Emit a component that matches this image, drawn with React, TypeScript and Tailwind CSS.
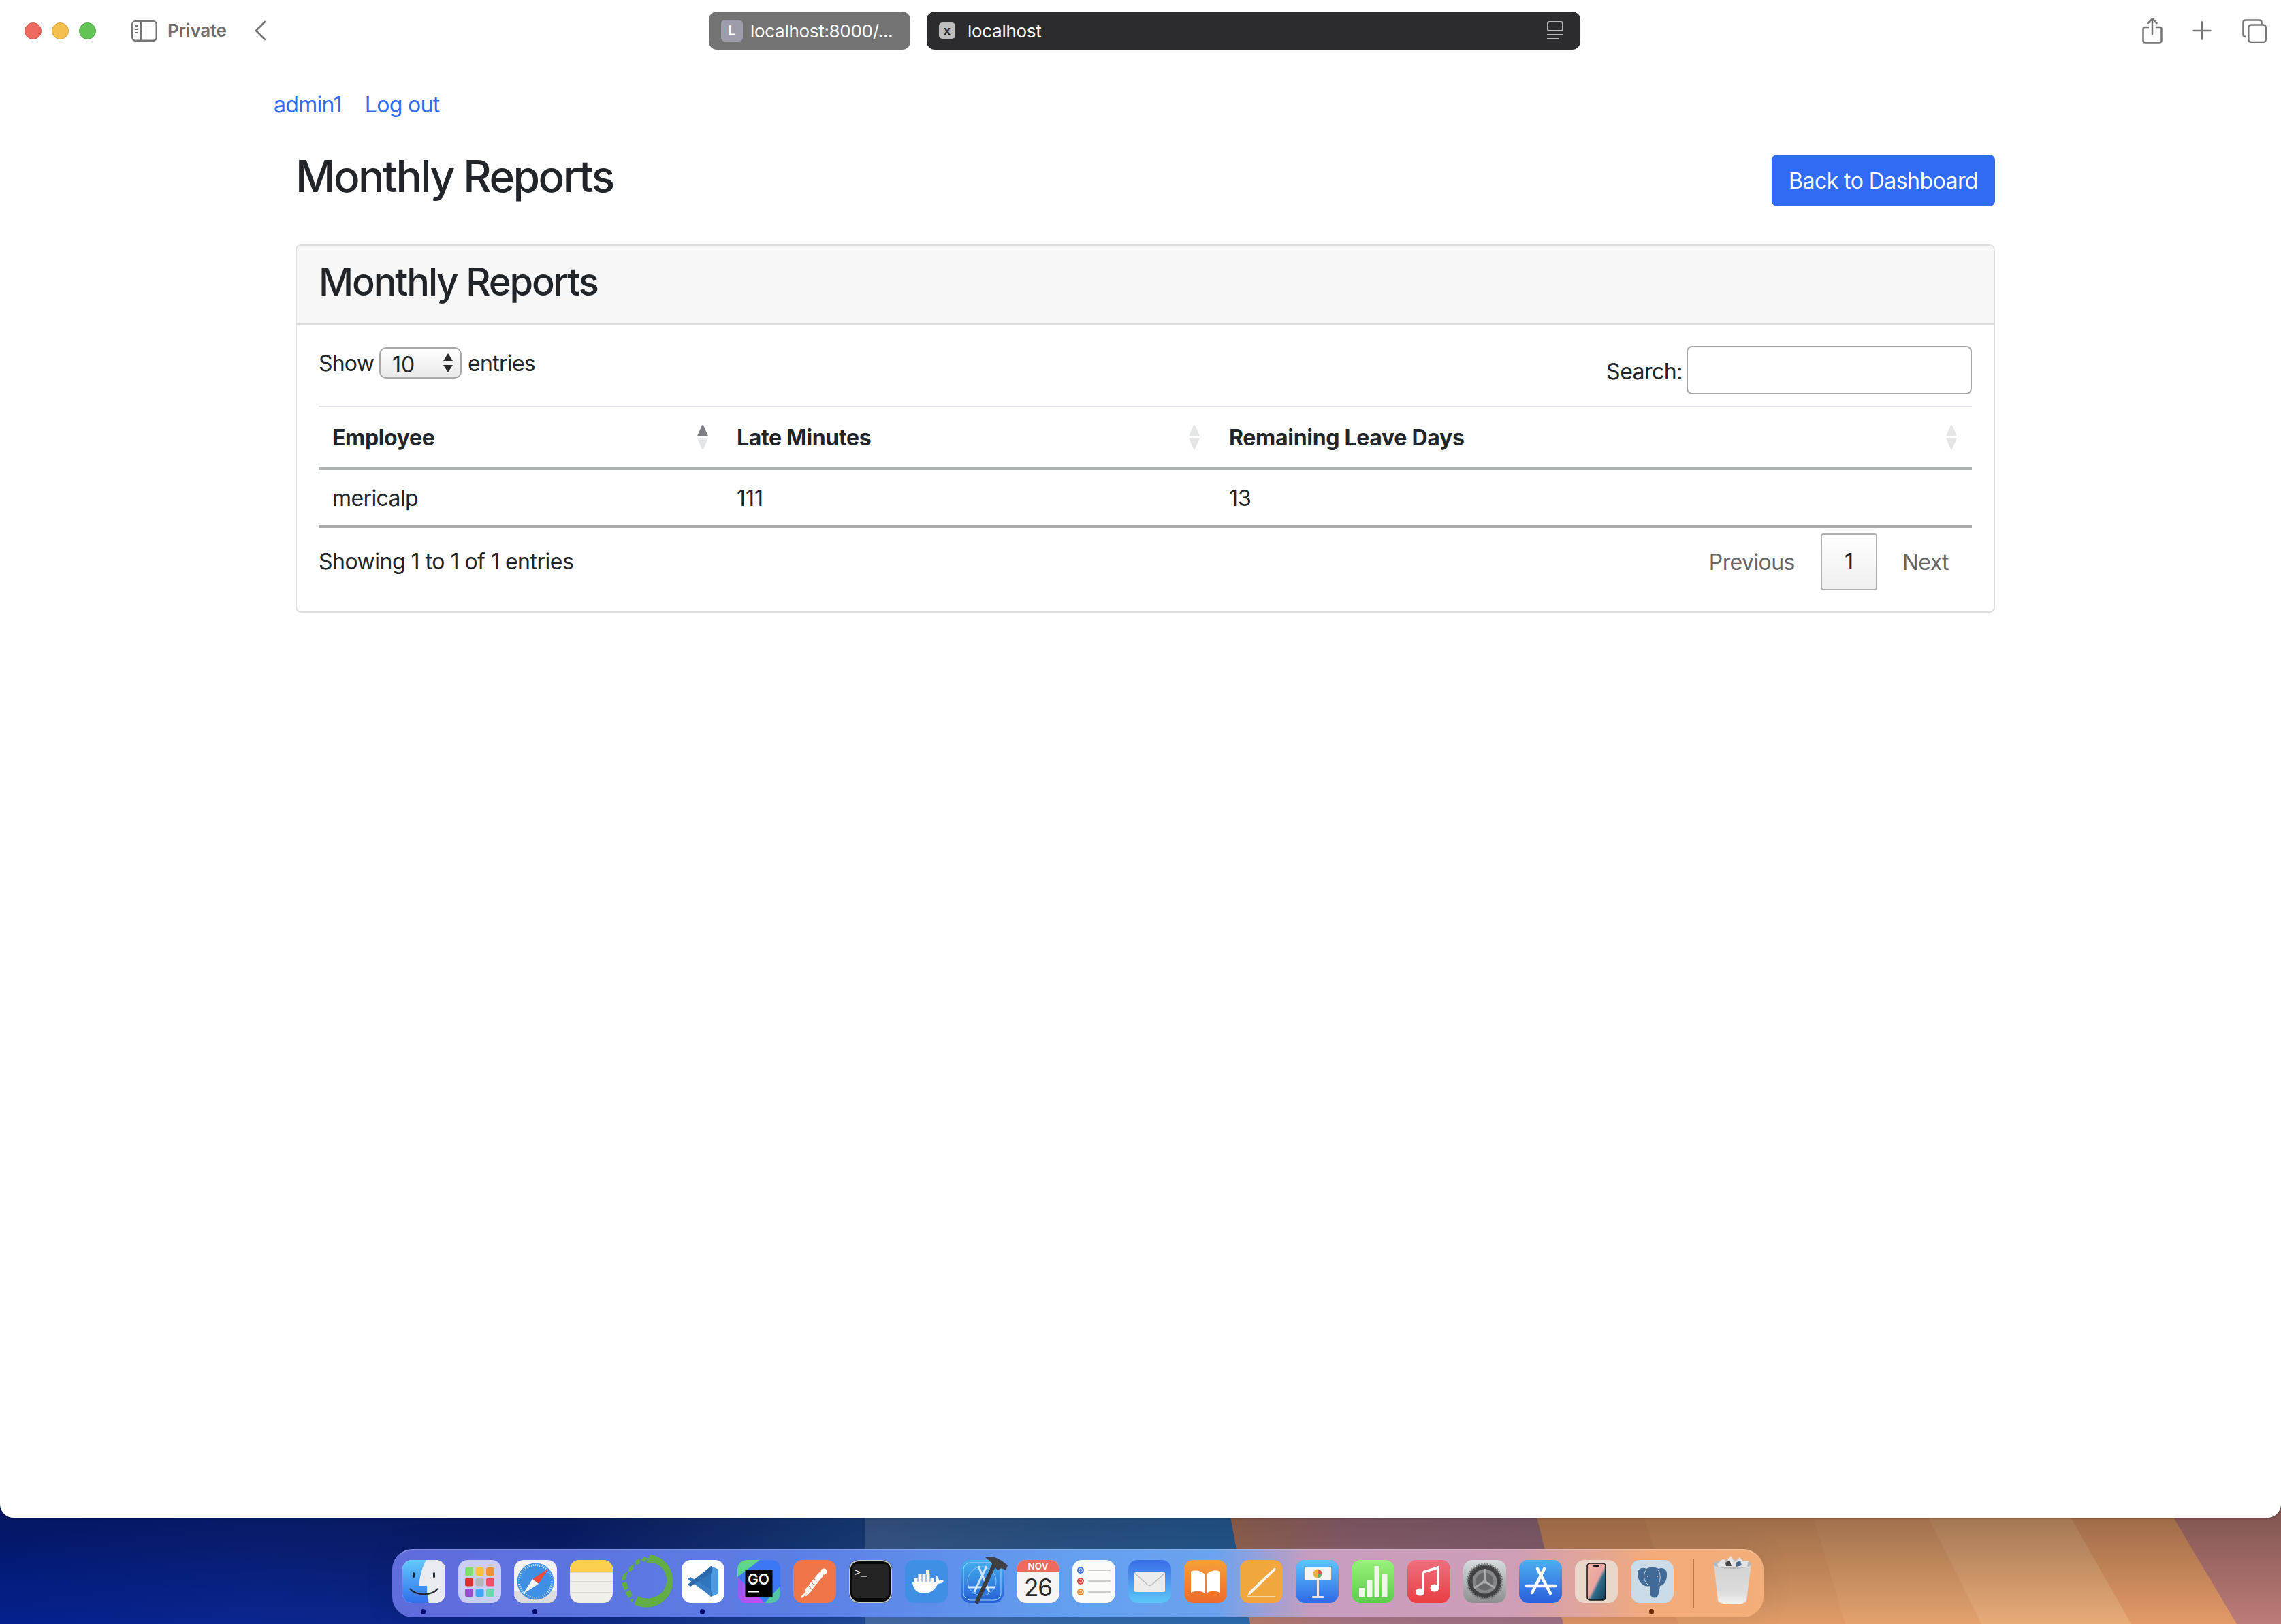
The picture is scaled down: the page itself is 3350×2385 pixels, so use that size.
import React from 'react'

const SortIcon = ({ active = false }: { active?: boolean }) => (
  <svg className="absolute right-[22px] top-[26px]" width="16" height="36" viewBox="0 0 16 36">
    <path d="M8 0 C9 0 10 2 11 5 L15.5 15 C16 16.500 15.500 17 14 17 L2 17 C.5 17 0 16.500 .5 15 L5 5 C6 2 7 0 8 0 Z" fill={active ? '#7d7f82' : '#e3e5e6'} />
    <path d="M8 36 C9 36 10 34 11 31 L15.500 21 C16 19.500 15.500 19 14 19 L2 19 C.5 19 0 19.500 .5 21 L5 31 C6 34 7 36 8 36 Z" fill="#e3e5e6" />
  </svg>
)

const Tile = ({ children, fill = '#fff', id }: { children?: React.ReactNode; fill?: string; id?: string }) => (
  <svg width="63" height="63" viewBox="0 0 63 63" className="overflow-visible">
    <defs>
      <clipPath id={id ?? 'tile'}>
        <rect x="0" y="0" width="63" height="63" rx="14" />
      </clipPath>
    </defs>
    <g clipPath={`url(#${id ?? 'tile'})`}>
      <rect width="63" height="63" fill={fill} />
      {children}
    </g>
  </svg>
)

const FinderIcon = () => (
  <Tile id="finder" fill="#dfe3ea">
    <defs>
      <linearGradient id="finderBlue" x1="0" y1="0" x2="0" y2="1">
        <stop offset="0" stopColor="#63c9fb" />
        <stop offset="1" stopColor="#2f6fec" />
      </linearGradient>
    </defs>
    <path d="M0 0 H35 C29 12 25 24 25 38 H36 C36 46 37 55 39 63 H0 Z" fill="url(#finderBlue)" />
    <path d="M35 0 H63 V63 H39 C37 55 36 46 36 38 H25 C25 24 29 12 35 0 Z" fill="#e9ebf0" />
    <rect x="15" y="18" width="3" height="8" rx="1.500" fill="#1c2430" />
    <rect x="45" y="18" width="3" height="8" rx="1.500" fill="#1c2430" />
    <path d="M11 42 C20 53 43 53 52 42" fill="none" stroke="#1c2430" strokeWidth="2" />
  </Tile>
)

const LaunchpadIcon = () => {
  const colors = ['#7fe06a', '#f8c13c', '#ee9338', '#d8322c', '#b4b8bc', '#f0506a', '#9a4bd6', '#3fa6f8', '#6cd8ae']
  return (
    <Tile id="launch" fill="#c9cef2">
      {colors.map((c, i) => (
        <rect key={c} x={10 + (i % 3) * 15.500} y={11 + Math.floor(i / 3) * 15.500} width="12" height="12" rx="2.500" fill={c} />
      ))}
    </Tile>
  )
}

const SafariIcon = () => (
  <Tile id="safari" fill="#f4f4f6">
    <rect y="45" width="63" height="18" fill="#dddde0" />
    <circle cx="31.500" cy="31.500" r="27" fill="#3f8fe4" />
    <circle cx="31.500" cy="31.500" r="24" fill="none" stroke="#dcecfb" strokeWidth="3" strokeDasharray="1 2.200" />
    <path d="M50 13 L27 28 L36 35 Z" fill="#ef4a3c" />
    <path d="M13 50 L27 28 L36 35 Z" fill="#f4f4f4" />
  </Tile>
)

const NotesIcon = () => (
  <Tile id="notes" fill="#f1efea">
    <rect width="63" height="17" fill="#fbcf4e" />
    <rect y="17" width="63" height="1.500" fill="#c9c6bc" />
    <rect y="31" width="63" height="1" fill="#dedbd3" />
    <rect y="47" width="63" height="1" fill="#dedbd3" />
  </Tile>
)

const RingIcon = () => (
  <svg width="63" height="63" viewBox="0 0 63 63" className="overflow-visible">
    <path d="M36 -8 A39 39 0 1 1 12 65 L18 53 C25 57 33 57.500 40 55 A26 26 0 0 0 30 4 Z" fill="#62ae45" />
    <g fill="#62ae45">
      <path d="M27 -5 L33 -2 L27 3 L22 0 Z" />
      <path d="M14 1 L20 -2 L21 5 L15 8 Z" />
      <path d="M5 11 L12 6 L11 14 L4 18 Z" />
      <path d="M-4 21 L2 17 L1 27 L-6 31 Z" />
      <path d="M-6 34 L1 32 L4 41 L-2 45 Z" />
      <path d="M-1 48 L6 44 L10 52 L4 56 Z" />
      <path d="M6 59 L11 56 L10 63 Z" />
    </g>
  </svg>
)

const VSCodeIcon = () => (
  <Tile id="vscode" fill="#ffffff">
    <path d="M43 9 L54 14 V49 L43 54 L18 31 Z" fill="#2e75bd" />
    <path d="M43 9 L54 14 V49 L43 54 Z" fill="#4a9ae6" />
    <path d="M9 28 L13 25 L44 44 V54 L40 51 Z" fill="#3a7fc6" />
    <path d="M9 36 L13 39 L44 19 V9 L40 12 Z" fill="#2b69ab" />
  </Tile>
)

const GoLandIcon = () => (
  <Tile id="goland" fill="#3c78f6">
    <defs>
      <linearGradient id="goPurple" x1="0" y1="0" x2="1" y2="1">
        <stop offset="0" stopColor="#8f5cf0" />
        <stop offset="1" stopColor="#c84df0" />
      </linearGradient>
    </defs>
    <path d="M0 23 L33 0 H63 V38 L40 63 H0 Z" fill="#3c78f6" />
    <path d="M0 25 L33 0 H0 Z" fill="#5fd68f" />
    <path d="M0 25 L40 63 H0 Z" fill="url(#goPurple)" />
    <path d="M63 38 V63 H40 Z" fill="#53c4a4" />
    <rect x="11.500" y="15" width="40" height="40" fill="#000" />
    <text x="31" y="36" textAnchor="middle" fontSize="21" fontWeight="600" fill="#fff" fontFamily="Inter, sans-serif">GO</text>
    <rect x="16" y="45" width="16" height="2.500" fill="#fff" />
  </Tile>
)

const PostmanIcon = () => (
  <Tile id="postman" fill="#f0764a">
    <g fill="none" stroke="#fff" strokeLinecap="round">
      <circle cx="45" cy="17" r="4.500" fill="#fff" stroke="none" />
      <path d="M40 22 L22 44" strokeWidth="8" />
      <path d="M21 46 L13 54" strokeWidth="3" />
      <path d="M27 44 L19 52" strokeWidth="2" />
    </g>
    <path d="M30 26 L35 33 M26 31 L31 38 M22 37 L27 43" stroke="#f0764a" strokeWidth="1" />
  </Tile>
)

const TerminalIcon = () => (
  <Tile id="terminal" fill="#000">
    <rect x="1" y="1" width="61" height="61" rx="13" fill="#0a0a0a" stroke="#c9ccca" strokeWidth="2" />
    <rect x="5" y="6" width="53" height="50" rx="6" fill="#232323" />
    <text x="8" y="23" fontSize="15" fill="#fff" fontFamily="'Liberation Mono', monospace">&gt;_</text>
  </Tile>
)

const DockerIcon = () => (
  <Tile id="docker" fill="#3f8fe6">
    <g fill="#fff">
      <rect x="31" y="15" width="5" height="5" />
      <rect x="19.500" y="21" width="5" height="5" /><rect x="25.500" y="21" width="5" height="5" /><rect x="31.500" y="21" width="5" height="5" />
      <rect x="13.500" y="27" width="5" height="5" /><rect x="19.500" y="27" width="5" height="5" /><rect x="25.500" y="27" width="5" height="5" /><rect x="31.500" y="27" width="5" height="5" /><rect x="37.500" y="27" width="5" height="5" />
      <path d="M11 33 H45 C46 30 46 26 45 22 C48 24 50 27 50 30 C53 29 55 29 57 31 C55 34 51 35 48 35 C45 43 38 49 28 49 C18 49 12 43 11 33 Z" />
    </g>
  </Tile>
)

const XcodeIcon = () => (
  <svg width="63" height="72" viewBox="0 0 63 72" className="overflow-visible -mt-[5px]">
    <defs>
      <linearGradient id="xcBlue" x1="0" y1="0" x2="0" y2="1">
        <stop offset="0" stopColor="#46b0ee" />
        <stop offset="1" stopColor="#2560d8" />
      </linearGradient>
    </defs>
    <rect y="5" width="63" height="63" rx="14" fill="url(#xcBlue)" />
    <rect x="4" y="9" width="55" height="55" rx="10" fill="none" stroke="#a9d3f6" strokeWidth="1" />
    <circle cx="31" cy="36" r="21" fill="none" stroke="#8fc3f2" strokeWidth="1" />
    <path d="M26 14 L42 52 M38 14 L20 52 M11 45 H50" fill="none" stroke="#cfe5fb" strokeWidth="3" />
    <path d="M49 12 L24 66" stroke="#3a3c42" strokeWidth="6" strokeLinecap="round" />
    <path d="M36 1 C46 -2 56 2 69 13 L66 20 L60 17 L54 20 L47 12 C44 7 41 5 36 1 Z" fill="#3f4046" />
  </svg>
)

const CalendarIcon = () => (
  <Tile id="calendar" fill="#f7f5f1">
    <rect width="63" height="18" fill="#ec6a5e" />
    <text x="31.500" y="14" textAnchor="middle" fontSize="13.500" fontWeight="600" fill="#fff" fontFamily="Inter, sans-serif">NOV</text>
    <text x="31.500" y="53" textAnchor="middle" fontSize="35" fill="#2a2a2a" fontFamily="Inter, sans-serif" letterSpacing="-1">26</text>
  </Tile>
)

const RemindersIcon = () => (
  <Tile id="reminders" fill="#fbfbfa">
    {[['#3f74e0', 15], ['#e34840', 31], ['#ef9130', 47]].map(([c, y]) => (
      <g key={c as string}>
        <circle cx="12" cy={y as number} r="5" fill={c as string} />
        <circle cx="12" cy={y as number} r="2.500" fill="none" stroke="#fff" strokeWidth="0.800" />
        <rect x="23" y={(y as number) - 0.750} width="33" height="1.500" fill="#bdbdbd" />
      </g>
    ))}
  </Tile>
)

const MailIcon = () => (
  <Tile id="mail" fill="#4f9ef2">
    <defs>
      <linearGradient id="mailBlue" x1="0" y1="0" x2="0" y2="1">
        <stop offset="0" stopColor="#386de6" />
        <stop offset="1" stopColor="#5dc6fa" />
      </linearGradient>
    </defs>
    <rect width="63" height="63" fill="url(#mailBlue)" />
    <rect x="9" y="18" width="45" height="29" rx="2" fill="#ececec" />
    <path d="M9 19 L28 36 C30 38 33 38 35 36 L54 19" fill="none" stroke="#bcbcbc" strokeWidth="1.500" />
  </Tile>
)

const BooksIcon = () => (
  <Tile id="books" fill="#f28a30">
    <defs>
      <linearGradient id="booksOr" x1="0" y1="0" x2="0" y2="1">
        <stop offset="0" stopColor="#f5a03a" />
        <stop offset="1" stopColor="#ee6a2a" />
      </linearGradient>
    </defs>
    <rect width="63" height="63" fill="url(#booksOr)" />
    <path d="M30 21 C26 16 16 14 10 17 V48 C16 45 26 45 30 49 Z" fill="#fff" />
    <path d="M33 21 C37 16 47 14 53 17 V48 C47 45 37 45 33 49 Z" fill="#fff" />
  </Tile>
)

const PagesIcon = () => (
  <Tile id="pages" fill="#f2a63e">
    <path d="M50 12 C52 11 53 12 52 15 L17 49 L11 53 L14 46 Z" fill="#f7f7f7" />
    <rect x="11" y="53" width="41" height="1.500" fill="#f7d9a8" />
  </Tile>
)

const KeynoteIcon = () => (
  <Tile id="keynote" fill="#3f8ff0">
    <defs>
      <linearGradient id="keyBlue" x1="0" y1="0" x2="0" y2="1">
        <stop offset="0" stopColor="#5cc6fb" />
        <stop offset="1" stopColor="#2f68e6" />
      </linearGradient>
    </defs>
    <rect width="63" height="63" fill="url(#keyBlue)" />
    <rect x="13" y="10" width="39" height="19" rx="1" fill="#f4f4f4" />
    <circle cx="32" cy="20" r="6.500" fill="#f1b23d" />
    <path d="M32 20 V13.500 A6.500 6.500 0 0 1 38.500 20 Z" fill="#e5534b" />
    <path d="M32 20 H38.500 A6.500 6.500 0 0 1 32 26.500 Z" fill="#55b56a" />
    <rect x="31" y="29" width="3" height="25" fill="#e8e8e8" />
    <rect x="24" y="53" width="17" height="3" rx="1" fill="#e8e8e8" />
  </Tile>
)

const NumbersIcon = () => (
  <Tile id="numbers" fill="#6fda62">
    <defs>
      <linearGradient id="numGreen" x1="0" y1="0" x2="0" y2="1">
        <stop offset="0" stopColor="#98f27a" />
        <stop offset="1" stopColor="#5ccc4c" />
      </linearGradient>
    </defs>
    <rect width="63" height="63" fill="url(#numGreen)" />
    <rect x="11" y="41" width="8" height="14" rx="1" fill="#eef7ea" />
    <rect x="22.500" y="29" width="8" height="26" rx="1" fill="#eef7ea" />
    <rect x="33.500" y="9" width="7.500" height="46" rx="1" fill="#eef7ea" />
    <rect x="44.500" y="21" width="8" height="34" rx="1" fill="#eef7ea" />
  </Tile>
)

const MusicIcon = () => (
  <Tile id="music" fill="#ea4a52">
    <defs>
      <linearGradient id="musicRed" x1="0" y1="0" x2="0" y2="1">
        <stop offset="0" stopColor="#ef6f7f" />
        <stop offset="1" stopColor="#e83f42" />
      </linearGradient>
    </defs>
    <rect width="63" height="63" fill="url(#musicRed)" />
    <path d="M23 18 L45 11 V41" fill="none" stroke="#fff" strokeWidth="3.500" />
    <path d="M23 18 V49" fill="none" stroke="#fff" strokeWidth="3.500" />
    <ellipse cx="18.500" cy="47" rx="6.500" ry="5.500" fill="#fff" />
    <ellipse cx="40" cy="41" rx="6.500" ry="5.500" fill="#fff" />
  </Tile>
)

const SettingsIcon = () => (
  <Tile id="settings" fill="#b6bcbe">
    <defs>
      <linearGradient id="setGrey" x1="0" y1="0" x2="0" y2="1">
        <stop offset="0" stopColor="#d6dde0" />
        <stop offset="1" stopColor="#8d8f8f" />
      </linearGradient>
    </defs>
    <rect width="63" height="63" fill="url(#setGrey)" />
    <circle cx="31.500" cy="31.500" r="25" fill="#3f4143" />
    <circle cx="31.500" cy="31.500" r="25" fill="none" stroke="#77797b" strokeWidth="4" strokeDasharray="2 2" />
    <circle cx="31.500" cy="31.500" r="18" fill="#85878a" />
    <circle cx="31.500" cy="31.500" r="13" fill="#66686a" />
    <path d="M31.500 31.500 V13 M31.500 31.500 L47 41 M31.500 31.500 L16 41" stroke="#a9abad" strokeWidth="3" />
    <circle cx="31.500" cy="31.500" r="3" fill="#a9abad" />
  </Tile>
)

const AppStoreIcon = () => (
  <Tile id="appstore" fill="#3a8eea">
    <defs>
      <linearGradient id="appBlue" x1="0" y1="0" x2="0" y2="1">
        <stop offset="0" stopColor="#4eaef0" />
        <stop offset="1" stopColor="#2a5fdc" />
      </linearGradient>
    </defs>
    <rect width="63" height="63" fill="url(#appBlue)" />
    <g stroke="#fff" strokeWidth="4.500" strokeLinecap="round" fill="none">
      <path d="M37 13 L19 48" />
      <path d="M27 13 L46 49" />
      <path d="M11 38 H53" />
    </g>
  </Tile>
)

const IPhoneIcon = () => (
  <Tile id="iphone" fill="#e8d8cc">
    <defs>
      <linearGradient id="phoneBg" x1="0" y1="0" x2="1" y2="1">
        <stop offset="0" stopColor="#f2b0a4" />
        <stop offset="0.500" stopColor="#e9a6a0" />
        <stop offset="0.600" stopColor="#2f6f8c" />
        <stop offset="1" stopColor="#123a50" />
      </linearGradient>
    </defs>
    <rect x="18" y="5" width="27" height="54" rx="4" fill="url(#phoneBg)" stroke="#111" strokeWidth="1.500" />
    <rect x="27" y="7.500" width="9" height="2.500" rx="1.250" fill="#111" />
  </Tile>
)

const PgAdminIcon = () => (
  <Tile id="pgadmin" fill="#ccdbe8">
    <path d="M10 20 C10 13 17 10 23 13 C27 10 36 10 41 13 C47 10 54 14 53 22 C53 31 49 37 43 38 C42 44 42 50 38 55 C34 56 31 55 29 52 L28 38 C22 40 16 36 13 31 C11 28 10 24 10 20 Z" fill="#426a97" />
    <path d="M23 14 C18 20 18 30 25 36 M40 14 C44 20 44 28 41 36" fill="none" stroke="#e8eef4" strokeWidth="0.800" />
    <circle cx="25" cy="24" r="1" fill="#e8eef4" />
    <circle cx="39" cy="24" r="1" fill="#e8eef4" />
  </Tile>
)

const TrashIcon = () => (
  <svg width="57" height="72" viewBox="0 0 57 72" className="overflow-visible">
    <defs>
      <linearGradient id="trashBody" x1="0" y1="0" x2="0" y2="1">
        <stop offset="0" stopColor="#d2d2d2" />
        <stop offset="0.700" stopColor="#dcdcdc" />
        <stop offset="1" stopColor="#f4f4f4" />
      </linearGradient>
    </defs>
    <path d="M1 13 L7 66 C8 70 14 72 28 72 C42 72 48 70 49 66 L56 13 Z" fill="url(#trashBody)" />
    <ellipse cx="28.500" cy="13" rx="28" ry="7" fill="#b9b9b9" />
    <path d="M6 13 L15 5 L19 10 L26 1 L32 10 L39 3 L44 9 L52 8 L50 17 L8 18 Z" fill="#e4e4e6" />
    <path d="M18 11 L24 7 L27 16 L19 16 Z" fill="#444" />
    <path d="M33 11 L40 8 L42 15 L34 17 Z" fill="#4a6a90" />
  </svg>
)

const DockItem = ({ children, dot }: { children: React.ReactNode; dot?: string }) => (
  <div className="relative w-[63px] h-[63px] shrink-0">
    {children}
    {dot && <span className={`absolute left-[27px] top-[72px] w-[7px] h-[8px] rounded-full ${dot}`} />}
  </div>
)

// the desktop picture under the window, only its lower strip shows
const Wallpaper = () => (
  <svg className="absolute left-0 bottom-0" width="3350" height="185" viewBox="0 0 3350 185">
    <defs>
      <linearGradient id="wpLeft" x1="0" y1="0" x2="1" y2="0">
        <stop offset="0" stopColor="#04208e" />
        <stop offset="0.300" stopColor="#0a2590" />
        <stop offset="0.650" stopColor="#0c2482" />
        <stop offset="1" stopColor="#1f4a98" />
      </linearGradient>
      <linearGradient id="wpMid" x1="0" y1="0" x2="1" y2="0">
        <stop offset="0" stopColor="#456aa6" />
        <stop offset="0.500" stopColor="#3468a8" />
        <stop offset="1" stopColor="#2a6cb0" />
      </linearGradient>
      <linearGradient id="wpPlum" x1="0" y1="0" x2="1" y2="0">
        <stop offset="0" stopColor="#b87c62" />
        <stop offset="0.300" stopColor="#a87484" />
        <stop offset="1" stopColor="#9a7088" />
      </linearGradient>
      <linearGradient id="wpShade" x1="0" y1="0" x2="0" y2="1">
        <stop offset="0" stopColor="#000" stopOpacity="0.340" />
        <stop offset="0.160" stopColor="#000" stopOpacity="0.300" />
        <stop offset="1" stopColor="#000" stopOpacity="0" />
      </linearGradient>
    </defs>
    <rect width="1270" height="185" fill="url(#wpLeft)" />
    <rect x="1270" width="600" height="185" fill="url(#wpMid)" />
    <path d="M1802 0 H2400 V185 H1836 Z" fill="url(#wpPlum)" />
    <path d="M2250 0 H2410 L2470 185 H2296 Z" fill="#dc9464" />
    <path d="M2405 0 H2660 L2715 185 H2465 Z" fill="#e09c68" />
    <path d="M2655 0 H2823 L2915 185 H2710 Z" fill="#e4a26e" />
    <path d="M2818 0 H3030 L3135 185 H2910 Z" fill="#e9ab78" />
    <path d="M3025 0 H3180 L3290 185 H3130 Z" fill="#e39a68" />
    <path d="M3175 0 H3350 V185 H3285 Z" fill="#bd7c78" />
    <rect width="3350" height="185" fill="url(#wpShade)" />
  </svg>
)

export default function App() {
  return (
    <div className="relative w-[3350px] h-[2385px] overflow-hidden flex flex-col font-[Inter,'Liberation_Sans',sans-serif] text-[32px] text-[#212529]">
      <Wallpaper />

      {/* browser window */}
      <div className="relative w-full h-[2229px] shrink-0 bg-white rounded-b-[20px] shadow-[0_1px_3px_rgba(0,0,0,0.35)]">
        <header className="h-[90px] flex items-center text-[#6e6e6e]">
          <div className="flex gap-[15px] ml-[36px]">
            <span className="w-[25px] h-[25px] rounded-full bg-[#ee6a5f] border border-[#d3524a]" />
            <span className="w-[25px] h-[25px] rounded-full bg-[#f5bf4f] border border-[#d9a23c]" />
            <span className="w-[25px] h-[25px] rounded-full bg-[#61c454] border border-[#4ea843]" />
          </div>
          <svg className="ml-[52px]" width="38" height="31" viewBox="0 0 38 31" fill="none" stroke="#757575" strokeWidth="2.500">
            <rect x="1.250" y="1.250" width="35.500" height="28.500" rx="4.500" />
            <path d="M14 1.250 V29.750" />
            <path d="M5 8 H9 M5 13 H9 M5 18 H9" strokeWidth="2" stroke="#757575" />
          </svg>
          <span className="ml-[15px] w-[89px] text-[26px] font-semibold leading-none tracking-[-0.25px] whitespace-nowrap">Private</span>
          <svg className="ml-[38px]" width="18" height="30" viewBox="0 0 18 30" fill="none" stroke="#757575" strokeWidth="2.600" strokeLinecap="round" strokeLinejoin="round">
            <path d="M16 2 L3 15 L16 28" />
          </svg>

          <div className="ml-[650px] w-[296px] h-[56px] rounded-[12px] bg-[#737373] flex items-center text-white text-[26px] pl-[18px]">
            <span className="w-[32px] h-[32px] rounded-[6px] bg-[#9c9cab] flex items-center justify-center text-[20px] font-bold">L</span>
            <span className="ml-[11px] tracking-[-0.3px]">localhost:8000/...</span>
          </div>
          <div className="ml-[24px] w-[960px] h-[56px] rounded-[12px] bg-[#2c2c2e] flex items-center text-white text-[26px] pl-[18px]">
            <span className="w-[24px] h-[24px] rounded-[5px] bg-[#bdbdbd] flex items-center justify-center text-[#2c2c2e] text-[18px] font-bold leading-none">x</span>
            <span className="ml-[18px] tracking-[-0.3px]">localhost</span>
            <svg className="ml-auto mr-[25px]" width="24" height="28" viewBox="0 0 24 28" fill="none" stroke="#b8b8b8" strokeWidth="2">
              <rect x="1" y="1" width="22" height="13" rx="2.500" />
              <path d="M0 20 H24" />
              <path d="M0 26 H17" />
            </svg>
          </div>

          <svg className="ml-[825px]" width="30" height="38" viewBox="0 0 30 38" fill="none" stroke="#757575" strokeWidth="2.500" strokeLinecap="round" strokeLinejoin="round">
            <path d="M9 14 H4 C2.500 14 1.500 15 1.500 16.500 V33.500 C1.500 35.500 2.500 36.500 4.500 36.500 H25.500 C27.500 36.500 28.500 35.500 28.500 33.500 V16.500 C28.500 15 27.500 14 26 14 H21" />
            <path d="M15 25 V2 M8.500 8 L15 1.500 L21.500 8" />
          </svg>
          <svg className="ml-[44px]" width="28" height="28" viewBox="0 0 28 28" fill="none" stroke="#757575" strokeWidth="2.500" strokeLinecap="round">
            <path d="M14 1.500 V26.500 M1.500 14 H26.500" />
          </svg>
          <svg className="ml-[45px]" width="36" height="35" viewBox="0 0 36 35" fill="none" stroke="#757575" strokeWidth="2.500">
            <path d="M5 26 C2.500 26 1.500 25 1.500 22.500 V5 C1.500 2.500 2.500 1.500 5 1.500 H25 C27.500 1.500 28.500 2.500 28.500 5 V8" />
            <rect x="9.250" y="8.500" width="25.500" height="25.500" rx="4" />
          </svg>
        </header>

        <nav className="flex gap-[34px] ml-[402px] mt-[39px] pt-[2px] h-[48px] items-center text-[#2f6bf3] tracking-[-0.7px]">
          <a href="#">admin1</a>
          <a href="#">Log out</a>
        </nav>

        <main className="ml-[434px] w-[2496px] mt-[42px]">
          <div className="flex justify-between items-start h-[84px] mb-[56px]">
            <h2 className="pt-[1px] text-[64px] leading-[77px] font-medium tracking-[-2.5px]">Monthly Reports</h2>
            <button className="mt-[8px] w-[328px] h-[76px] pt-[1px] rounded-[8px] bg-[#316bf5] text-white tracking-[-0.55px]">Back to Dashboard</button>
          </div>

          <section className="border-2 border-[#dfdfdf] rounded-[8px] h-[541px]">
            <div className="h-[116px] pb-[8px] bg-[#f7f7f7] border-b-2 border-[#dcdcdc] rounded-t-[6px] flex items-center px-[32px]">
              <h3 className="text-[56px] font-medium tracking-[-2.1px]">Monthly Reports</h3>
            </div>
            <div className="px-[32px] pt-[31px]">
              <div className="flex justify-between items-start h-[88px]">
                <div className="flex items-center mt-[2px] h-[46px]">
                  <span className="pt-[2px] tracking-[-0.8px]">Show</span>
                  <div className="relative ml-[8px] mr-[9px]">
                    <select className="appearance-none block w-[121px] h-[46px] pl-[17px] rounded-[10px] border-2 border-[#a8a8a8] bg-linear-to-b from-white to-[#e9e9e9]" defaultValue="10">
                      <option>10</option>
                      <option>25</option>
                    </select>
                    <svg className="absolute right-[12px] top-[9px]" width="16" height="28" viewBox="0 0 16 28" fill="#2c2c2c">
                      <path d="M8 0 L15 11 H1 Z" />
                      <path d="M8 28 L15 17 H1 Z" />
                    </svg>
                  </div>
                  <span className="pt-[2px] tracking-[-0.7px]">entries</span>
                </div>
                <label className="flex items-center h-[71px]">
                  <span className="mr-[6px] pt-[4px] tracking-[-0.5px]">Search:</span>
                  <input className="w-[419px] h-[71px] rounded-[8px] border-2 border-[#a8a8a8] bg-white" />
                </label>
              </div>

              <table className="w-full table-fixed border-t-2 border-[#dee2e6] border-collapse">
                <thead>
                  <tr className="h-[91px] border-b-4 border-[#b0b3b6]">
                    <th className="relative w-[594px] pl-[20px] pt-[2px] text-left font-bold tracking-[-0.35px]">Employee<SortIcon active /></th>
                    <th className="relative w-[722px] pl-[20px] pt-[2px] text-left font-bold tracking-[-0.35px]">Late Minutes<SortIcon /></th>
                    <th className="relative pl-[21px] pt-[2px] text-left font-bold tracking-[-0.3px]">Remaining Leave Days<SortIcon /></th>
                  </tr>
                </thead>
                <tbody>
                  <tr className="h-[85px] border-b-4 border-[#aaaaaa]">
                    <td className="pl-[20px] pt-[2px] tracking-[-0.6px]">mericalp</td>
                    <td className="pl-[20px] pt-[2px] tracking-[0px]">111</td>
                    <td className="pl-[21px] pt-[2px] tracking-[0px]">13</td>
                  </tr>
                </tbody>
              </table>

              <div className="flex justify-between items-start mt-[8px]">
                <span className="mt-[18px] tracking-[-0.5px]">Showing 1 to 1 of 1 entries</span>
                <div className="flex items-center text-[#666666] tracking-[-0.6px] pr-[34px]">
                  <span className="pt-[2px]">Previous</span>
                  <span className="ml-[38px] w-[83px] h-[84px] rounded-[4px] border-2 border-[#b0b0b0] bg-linear-to-b from-white to-[#efefef] flex items-center justify-center text-[#212529]">1</span>
                  <span className="ml-[37px] pt-[2px]">Next</span>
                </div>
              </div>
            </div>
          </section>
        </main>
      </div>

      {/* dock */}
      <div className="relative z-10 mt-[46px] ml-[576px] w-[2014px] h-[100px] rounded-[30px] border-t-2 border-white/20 bg-[linear-gradient(90deg,#5f6cdb_0%,#5b7fe6_30%,#64a0ef_50%,#6aa3ef_60%,#c79dbf_67%,#cf9eb6_82%,#f3ab7a_92%,#f3ae79_100%)] shadow-[0_0_50px_rgba(0,0,0,0.07)] flex items-start pl-[15px] pt-[14px] gap-[19px]">
        <DockItem dot="bg-[#000a70]"><FinderIcon /></DockItem>
        <DockItem><LaunchpadIcon /></DockItem>
        <DockItem dot="bg-[#000a70]"><SafariIcon /></DockItem>
        <DockItem><NotesIcon /></DockItem>
        <DockItem><RingIcon /></DockItem>
        <DockItem dot="bg-[#000a70]"><VSCodeIcon /></DockItem>
        <DockItem><GoLandIcon /></DockItem>
        <DockItem><PostmanIcon /></DockItem>
        <DockItem><TerminalIcon /></DockItem>
        <DockItem><DockerIcon /></DockItem>
        <DockItem><XcodeIcon /></DockItem>
        <DockItem><CalendarIcon /></DockItem>
        <DockItem><RemindersIcon /></DockItem>
        <DockItem><MailIcon /></DockItem>
        <DockItem><BooksIcon /></DockItem>
        <DockItem><PagesIcon /></DockItem>
        <DockItem><KeynoteIcon /></DockItem>
        <DockItem><NumbersIcon /></DockItem>
        <DockItem><MusicIcon /></DockItem>
        <DockItem><SettingsIcon /></DockItem>
        <DockItem><AppStoreIcon /></DockItem>
        <DockItem><IPhoneIcon /></DockItem>
        <DockItem dot="bg-[#6b2a00]"><PgAdminIcon /></DockItem>
        <span className="w-[2px] h-[72px] -mt-[2px] ml-[9px] bg-[#c07a40]" />
        <div className="ml-[9px] -mt-[7px] w-[57px] shrink-0"><TrashIcon /></div>
      </div>
    </div>
  )
}
